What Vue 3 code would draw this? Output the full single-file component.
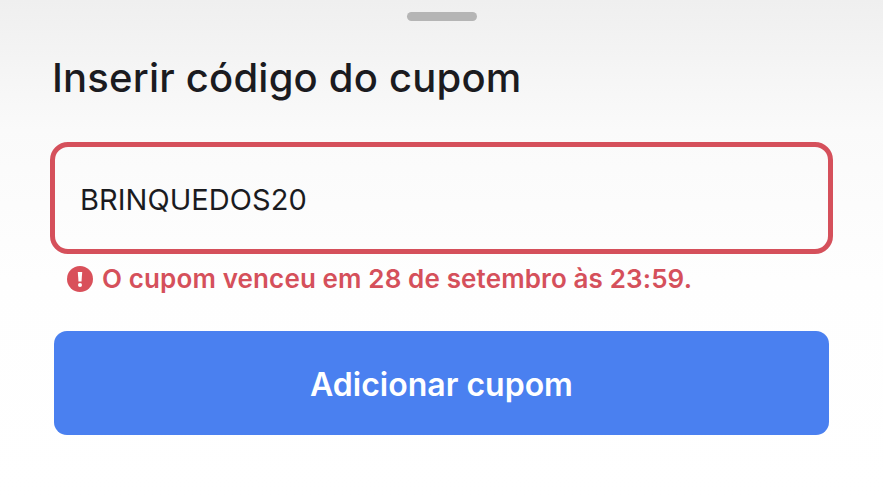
<template>
  <div class="sheet">
    <div class="handle"></div>
    <h1 class="title">Inserir código do cupom</h1>
    <div class="field">{{ code }}</div>
    <div class="error">
      <svg class="error_icon" viewBox="0 0 26 26">
        <circle cx="13" cy="13" r="13" fill="#d9505a" />
        <path d="M10.8 6h4.4l-.7 9.4h-3z" fill="#fff" />
        <circle cx="13" cy="19" r="2" fill="#fff" />
      </svg>
      <span>{{ message }}</span>
    </div>
    <button class="submit">Adicionar cupom</button>
  </div>
</template>

<script setup>
const code = 'BRINQUEDOS20';
const message = 'O cupom venceu em 28 de setembro às 23:59.';
</script>

<style>
body {
  margin: 0;
  background: #fff;
}
</style>

<style scoped>
.sheet {
  width: 883px;
  height: 500px;
  box-sizing: border-box;
  padding: 12px 50px 0;
  background: linear-gradient(to bottom, #efefef 0, #fafafa 130px, #fefefe 280px, #ffffff 500px);
  font-family: Inter, "Liberation Sans", sans-serif;
  overflow: hidden;
}

.handle {
  width: 70px;
  height: 9px;
  margin: 0 auto;
  border-radius: 5px;
  background: #b5b5b5;
}

.title {
  margin: 31px 0 0 2px;
  font-size: 40px;
  letter-spacing: 0.2px;
  line-height: 52px;
  font-weight: 500;
  color: #1b1b1f;
}

.field {
  height: 112px;
  margin-top: 38px;
  box-sizing: border-box;
  padding: 2px 0 0 25px;
  display: flex;
  align-items: center;
  border: 5px solid #d5505b;
  border-radius: 18px;
  font-size: 29px;
  letter-spacing: 0.05px;
  font-weight: 400;
  color: #1b1b1f;
}

.error {
  display: flex;
  align-items: center;
  gap: 9px;
  margin: 10px 0 0 17px;
  font-size: 26px;
  letter-spacing: 0.13px;
  line-height: 30px;
  font-weight: 600;
  color: #d5505b;
}

.error_icon {
  width: 26px;
  height: 26px;
}

.submit {
  display: block;
  width: 775px;
  height: 104px;
  margin: 37px 0 0 4px;
  padding-top: 3px;
  border: none;
  border-radius: 13px;
  background: #4a80f0;
  color: #fff;
  font-family: inherit;
  font-size: 32px;
  font-weight: 600;
}
</style>
